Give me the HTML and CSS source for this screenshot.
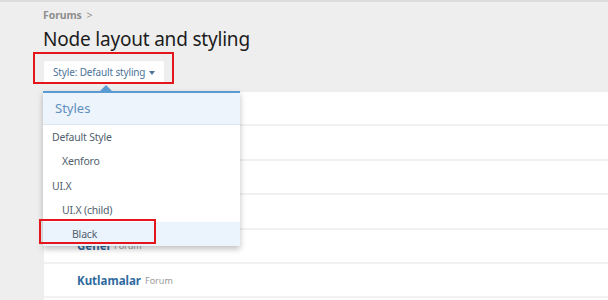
FILE: index.html
```html
<!DOCTYPE html>
<html>
<head>
    <title>Node layout and styling</title>
    <link rel="stylesheet" href="styles.css">
</head>
<body>
    <div class="page">
        <div class="breadcrumb">Forums <span class="sep">&gt;</span></div>
        <h1>Node layout and styling</h1>

        <div class="style-chooser">
            <button class="style-btn">Style: Default styling <span class="caret"></span></button>

            <div class="menu">
                <span class="menu-arrow"></span>
                <div class="menu-header">Styles</div>
                <div class="menu-item lvl0">Default Style</div>
                <div class="menu-item lvl1">Xenforo</div>
                <div class="menu-item lvl0">UI.X</div>
                <div class="menu-item lvl1">UI.X (child)</div>
                <div class="menu-item lvl2 selected">Black</div>
            </div>

            <!-- annotation boxes from the screenshot -->
            <div class="mark mark-btn"></div>
            <div class="mark mark-item"></div>
        </div>

        <div class="node-list">
            <div class="node-row"></div>
            <div class="node-row"></div>
            <div class="node-row"></div>
            <div class="node-row"></div>
            <div class="node-row"><a class="node-title">Genel</a> <span class="node-type">Forum</span></div>
            <div class="node-row"><a class="node-title">Kutlamalar</a> <span class="node-type">Forum</span></div>
            <div class="node-row"></div>
        </div>
    </div>
</body>
</html>
```

FILE: styles.css
```css
body {
    margin: 0;
    padding: 0;
    background: #eeeeee;
    border-top: 2px solid #dcdcdc;
    font-family: "Noto Sans", "Open Sans", sans-serif;
    overflow: hidden;
}

.page {
    padding-left: 43px;
}

.breadcrumb {
    margin-top: 6px;
    font-size: 10.5px;
    font-weight: bold;
    letter-spacing: -0.1px;
    color: #8e8e8e;
    line-height: 14px;
}

.breadcrumb .sep {
    font-weight: normal;
    margin-left: 2px;
}

h1 {
    margin: 4px 0 0;
    font-size: 19px;
    letter-spacing: -0.2px;
    font-weight: normal;
    color: #1c1c1c;
    line-height: 26px;
}

.style-chooser {
    position: relative;
    margin-top: 9px;
    height: 23px;
}

.style-btn {
    display: block;
    margin: 0 0 0 1px;
    height: 23px;
    padding: 0 9px;
    background: white;
    border: none;
    border-radius: 2px 2px 0 0;
    font-family: inherit;
    font-size: 10px;
    letter-spacing: -0.15px;
    color: #4d7498;
    line-height: 23px;
}

.caret {
    display: inline-block;
    width: 0;
    height: 0;
    border-left: 3px solid transparent;
    border-right: 3px solid transparent;
    border-top: 4px solid #4d7498;
    vertical-align: middle;
    margin-left: 1px;
}

.menu {
    position: absolute;
    left: 0;
    top: 30px;
    width: 197px;
    background: white;
    border-top: 2px solid #5b9bd1;
    box-shadow: 0 3px 6px rgba(0, 0, 0, 0.25);
    z-index: 2;
}

.menu-arrow {
    position: absolute;
    left: 57px;
    top: -8px;
    width: 0;
    height: 0;
    border-left: 6px solid transparent;
    border-right: 6px solid transparent;
    border-bottom: 6px solid #5b9bd1;
}

.menu-header {
    height: 31px;
    line-height: 30px;
    padding-left: 12px;
    background: #edf4fb;
    border-bottom: 1px solid #dde5ee;
    font-size: 13px;
    color: #5e8fc0;
}

.menu-item {
    height: 24.25px;
    line-height: 24.25px;
    font-size: 10.5px;
    letter-spacing: -0.2px;
    color: #52606e;
}

.menu-item.lvl0 { padding-left: 9px; }
.menu-item.lvl1 { padding-left: 19px; }
.menu-item.lvl2 { padding-left: 29px; }

.menu-item.selected {
    background: #ebf3fc;
}

.mark {
    position: absolute;
    border: 2px solid #e3151d;
    z-index: 3;
}

.mark-btn {
    left: -10px;
    top: -9px;
    width: 137px;
    height: 28px;
}

.mark-item {
    left: -4px;
    top: 158px;
    width: 113px;
    height: 21px;
}

.node-list {
    margin-top: 8px;
    margin-left: 1px;
    background: #f1f1f1;
}

.node-row {
    height: 32.4px;
    margin-bottom: 2px;
    background: white;
    padding-left: 33px;
    display: flex;
    align-items: center;
    gap: 4px;
}

.node-title {
    font-size: 11.5px;
    font-weight: bold;
    color: #2f6a9e;
}

.node-type {
    font-size: 9px;
    color: #9a9a9a;
}
```
